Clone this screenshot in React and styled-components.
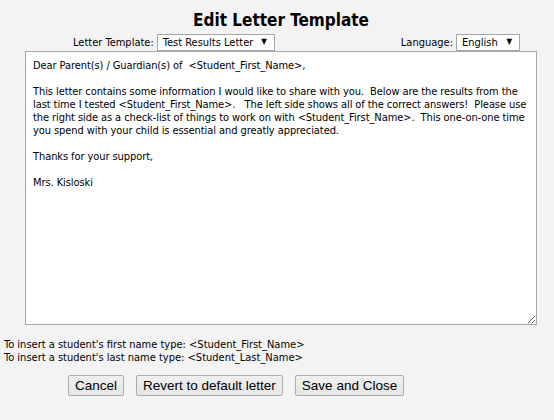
import React from "react";
import styled, { createGlobalStyle } from "styled-components";

const Global = createGlobalStyle`
  html, body { margin: 0; padding: 0; background: #f3f3f3; }
  body { width: 554px; height: 420px; overflow: hidden; }
`;

const FONT = `"DejaVu Sans Condensed", "DejaVu Sans", sans-serif`;

const Page = styled.div`
  font-family: ${FONT};
  font-size: 11px;
  color: #000;
  padding-top: 10px;
`;

const Column = styled.div`
  width: 512px;
  margin-left: 25px;
  display: flex;
  flex-direction: column;
`;

const Title = styled.h1`
  margin: 0;
  font-family: ${FONT};
  font-size: 17px;
  font-weight: bold;
  text-align: center;
  line-height: 21px;
  height: 21px;
`;

const SelectRow = styled.div`
  display: flex;
  justify-content: space-between;
  align-items: center;
  padding: 2px 17px 0 48px;
  height: 18px;
`;

const Field = styled.label`
  display: flex;
  align-items: center;
  gap: 3px;
`;

const FakeSelect = styled.div`
  box-sizing: border-box;
  width: ${(p) => p.$w}px;
  height: 17px;
  background: #fff;
  border: 1px solid #a6a6a6;
  display: flex;
  align-items: center;
  justify-content: space-between;
  padding: 0 7px 0 5px;
  font-size: 11px;
`;

const Arrow = styled.span`
  font-size: 8px;
  line-height: 1;
`;

const Letter = styled.textarea`
  box-sizing: border-box;
  width: 512px;
  height: 274px;
  margin: 0;
  border: 1px solid #a9a9a9;
  background: #fff;
  font-family: ${FONT};
  font-size: 11px;
  letter-spacing: -0.08px;
  line-height: 13px;
  padding: 7px 7px;
  color: #000;
  white-space: pre;
  overflow: hidden;
  resize: both;
  outline: none;
`;

const Hints = styled.div`
  margin: 13px 0 0 4px;
  line-height: 13px;
`;

const Buttons = styled.div`
  display: flex;
  gap: 12px;
  margin: 11px 0 0 68px;
`;

const Button = styled.button`
  box-sizing: border-box;
  height: 21px;
  padding: 0 6px;
  font-family: "Liberation Sans", Arial, sans-serif;
  font-size: 13.5px;
  color: #000;
  border: 1px solid #acacac;
  border-radius: 2px;
  background: linear-gradient(#f0f0f0, #e5e5e5);
`;

const text = `Dear Parent(s) / Guardian(s) of  <Student_First_Name>,

This letter contains some information I would like to share with you.  Below are the results from the
last time I tested <Student_First_Name>.   The left side shows all of the correct answers!  Please use
the right side as a check-list of things to work on with <Student_First_Name>.  This one-on-one time
you spend with your child is essential and greatly appreciated.

Thanks for your support,

Mrs. Kisloski`;

export default function App() {
  return (
    <Page>
      <Global />
      <Column>
        <Title>Edit Letter Template</Title>
        <SelectRow>
          <Field>
            Letter Template:
            <FakeSelect $w={118}>
              <span>Test Results Letter</span>
              <Arrow>▼</Arrow>
            </FakeSelect>
          </Field>
          <Field>
            Language:
            <FakeSelect $w={64}>
              <span>English</span>
              <Arrow>▼</Arrow>
            </FakeSelect>
          </Field>
        </SelectRow>
        <Letter defaultValue={text} spellCheck={false} />
      </Column>
      <Hints>
        <div>To insert a student's first name type: &lt;Student_First_Name&gt;</div>
        <div>To insert a student's last name type: &lt;Student_Last_Name&gt;</div>
      </Hints>
      <Buttons>
        <Button>Cancel</Button>
        <Button>Revert to default letter</Button>
        <Button>Save and Close</Button>
      </Buttons>
    </Page>
  );
}
